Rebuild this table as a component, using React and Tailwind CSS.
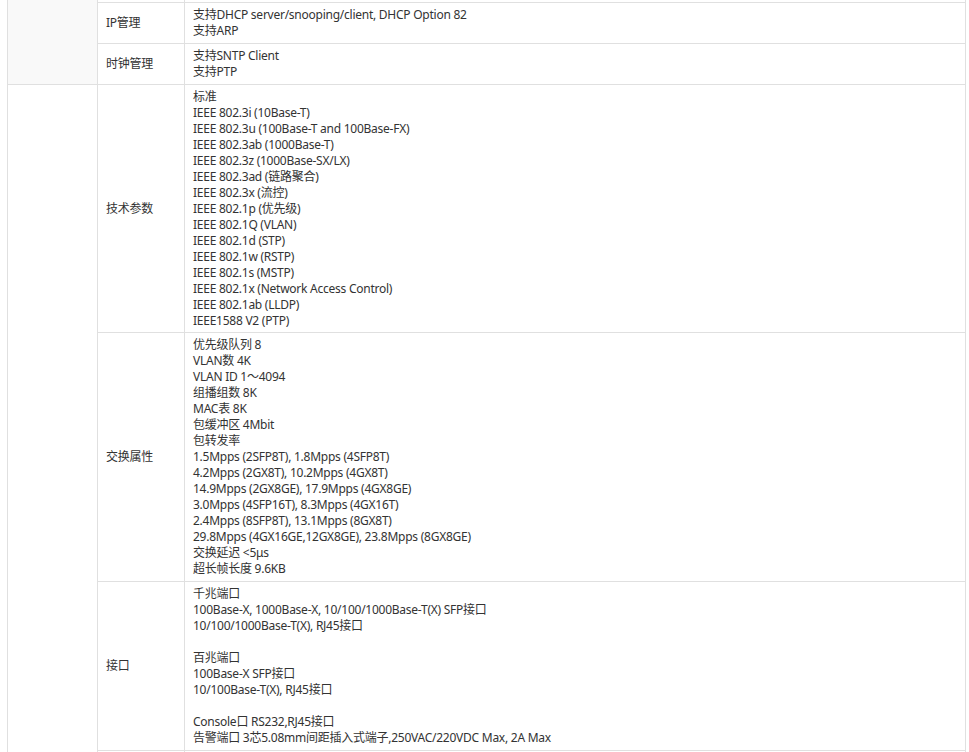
import React from "react";

const F = { fontFamily: '"Noto Sans", "Noto Sans CJK SC", sans-serif' };

function Lines({ items }) {
  return (
    <>
      {items.map((t, i) => (
        <div key={i} className="h-4 whitespace-pre">{t === "" ? "\u00a0" : t}</div>
      ))}
    </>
  );
}

const cell = "border border-[#e0e0e0] px-2 py-1 align-middle";
const cellTight = "border border-[#e0e0e0] px-2 pt-1 pb-[3px] align-middle";

export default function App() {
  const std = [
    "标准",
    "IEEE 802.3i (10Base-T)",
    "IEEE 802.3u (100Base-T and 100Base-FX)",
    "IEEE 802.3ab (1000Base-T)",
    "IEEE 802.3z (1000Base-SX/LX)",
    "IEEE 802.3ad (链路聚合)",
    "IEEE 802.3x (流控)",
    "IEEE 802.1p (优先级)",
    "IEEE 802.1Q (VLAN)",
    "IEEE 802.1d (STP)",
    "IEEE 802.1w (RSTP)",
    "IEEE 802.1s (MSTP)",
    "IEEE 802.1x (Network Access Control)",
    "IEEE 802.1ab (LLDP)",
    "IEEE1588 V2 (PTP)",
  ];
  const sw = [
    "优先级队列 8",
    "VLAN数 4K",
    "VLAN ID 1～4094",
    "组播组数 8K",
    "MAC表 8K",
    "包缓冲区 4Mbit",
    "包转发率",
    "1.5Mpps (2SFP8T), 1.8Mpps (4SFP8T)",
    "4.2Mpps (2GX8T), 10.2Mpps (4GX8T)",
    "14.9Mpps (2GX8GE), 17.9Mpps (4GX8GE)",
    "3.0Mpps (4SFP16T), 8.3Mpps (4GX16T)",
    "2.4Mpps (8SFP8T), 13.1Mpps (8GX8T)",
    "29.8Mpps (4GX16GE,12GX8GE), 23.8Mpps (8GX8GE)",
    "交换延迟 <5μs",
    "超长帧长度 9.6KB",
  ];
  const ifc = [
    "千兆端口",
    "100Base-X, 1000Base-X, 10/100/1000Base-T(X) SFP接口",
    "10/100/1000Base-T(X), RJ45接口",
    "",
    "百兆端口",
    "100Base-X SFP接口",
    "10/100Base-T(X), RJ45接口",
    "",
    "Console口 RS232,RJ45接口",
    "告警端口 3芯5.08mm间距插入式端子,250VAC/220VDC Max, 2A Max",
  ];
  return (
    <div className="bg-white h-[752px] overflow-hidden pl-[7px] text-[12px] leading-4 tracking-[-0.25px] text-[#333]" style={F}>
      <table className="w-[959px] border-collapse table-fixed">
        <colgroup>
          <col className="w-[90px]" />
          <col className="w-[87px]" />
          <col />
        </colgroup>
        <tbody>
          <tr className="h-[2px]">
            <td rowSpan={3} className="border border-t-0 border-[#e0e0e0] bg-[#f9f9f9] p-0"></td>
            <td className="border border-t-0 border-[#e0e0e0] p-0 h-[2px]"></td>
            <td className="border border-t-0 border-[#e0e0e0] p-0 h-[2px]"></td>
          </tr>
          <tr>
            <td className={cell}>IP管理</td>
            <td className={cell}>
              <Lines items={["支持DHCP server/snooping/client, DHCP Option 82", "支持ARP"]} />
            </td>
          </tr>
          <tr>
            <td className={cell}>时钟管理</td>
            <td className={cell}>
              <Lines items={["支持SNTP Client", "支持PTP"]} />
            </td>
          </tr>
          <tr>
            <td rowSpan={4} className="border border-[#e0e0e0] p-0"></td>
            <td className={cellTight}>技术参数</td>
            <td className={cellTight}>
              <Lines items={std} />
            </td>
          </tr>
          <tr>
            <td className={cell}>交换属性</td>
            <td className={cell}>
              <Lines items={sw} />
            </td>
          </tr>
          <tr>
            <td className={cell}>接口</td>
            <td className={cell}>
              <Lines items={ifc} />
            </td>
          </tr>
          <tr>
            <td className="border border-[#e0e0e0] px-2 py-1 h-10"></td>
            <td className="border border-[#e0e0e0] px-2 py-1 h-10"></td>
          </tr>
        </tbody>
      </table>
    </div>
  );
}
